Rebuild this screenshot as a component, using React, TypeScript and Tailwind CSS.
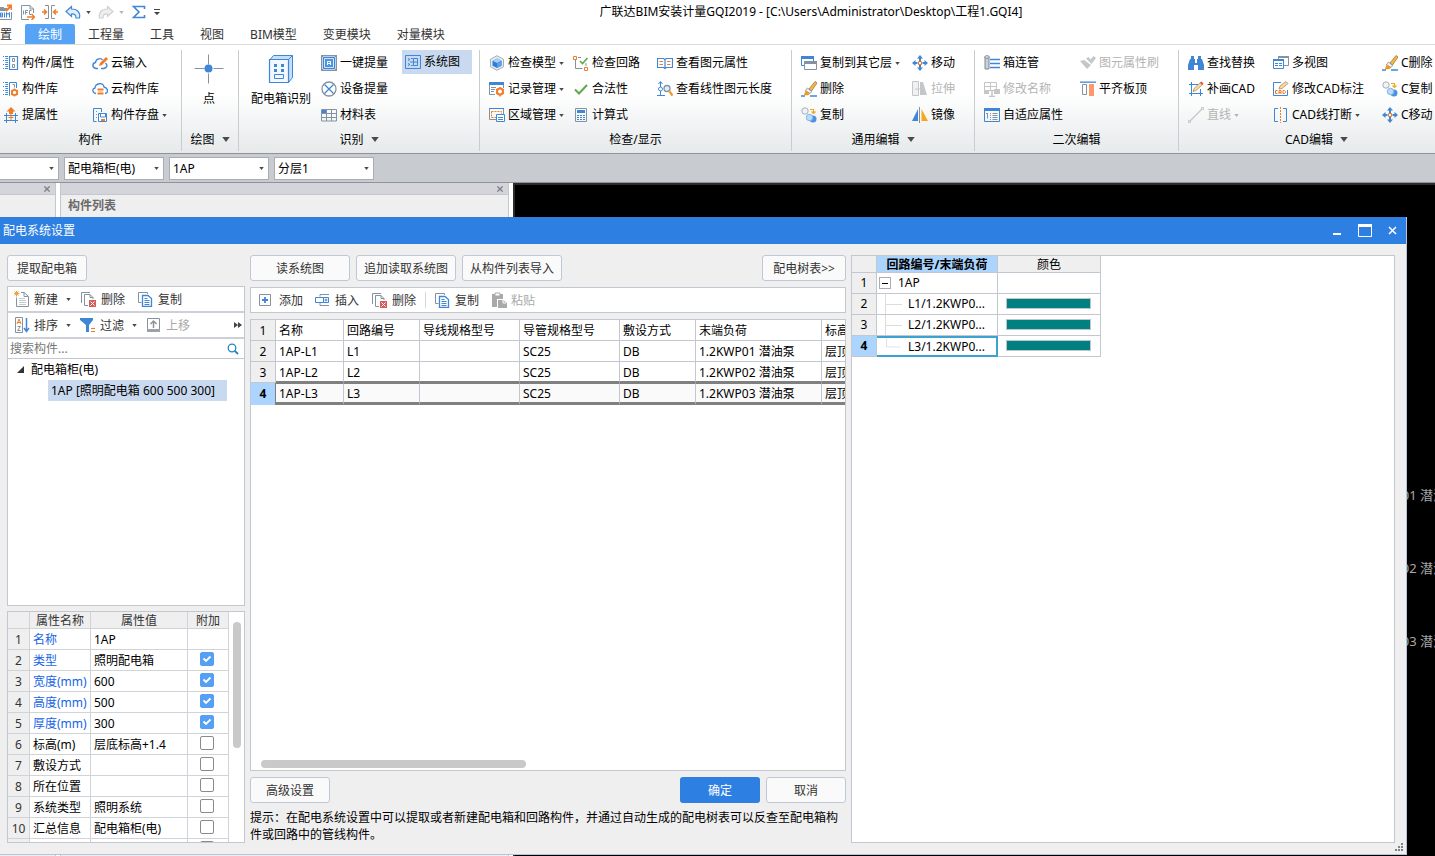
import React, { useState } from 'react';

const B = '#3f86d6';
const O = '#f07c28';
const G = '#8593a0';
const L = '#c4c6c8';

const icons: Record<string, React.ReactNode> = {
  bim: (
    <g fill="none">
      <path d="M4 3.500H8M15.500 8V15.500H4" stroke={G} />
      <path d="M4 4h7v3H4z" fill={G} />
      <path d="M4.500 9v4h2v-4zM4.500 11h2M8.500 8.500V13.500M10.500 13.500v-5l1.500 2 1.500-2v5" stroke={B} />
      <path d="M10 7l5-5M11 1.500h4.500V6" stroke={O} strokeWidth="2" />
    </g>
  ),
  ifc: (
    <g fill="none">
      <path d="M2.500 15.500V1.500H11l3.500 3.500v4M11 1.500V5h3.500M2.500 15.500H10" stroke={G} />
      <path d="M4.500 6.500v4M6.500 10.500v-4H9M6.500 8.500h2M12.500 6.500H10.500v4h2" stroke={G} />
      <path d="M8 13h7M12.500 10l3 3-3 3" stroke={O} strokeWidth="1.500" />
    </g>
  ),
  snap: (
    <g fill="none">
      <path d="M3 1.500h3.500v13H3M13 1.500H9.500v13H13" stroke={G} />
      <path d="M0 8h4M2 5.500L4.500 8 2 10.500M16 8h-4M14 5.500L11.500 8l2.500 2.500" stroke={O} strokeWidth="1.500" />
    </g>
  ),
  undo: <path d="M6.500 2.500L1 7.500l5.500 5V10c3-.3 4.500 1 4.500 4h3.500c1-5-1.500-9-8-9z" fill="#e2eefb" stroke={B} strokeWidth="1.200" />,
  redo: <path d="M9.500 2.500l5.500 5-5.500 5V10c-3-.3-4.500 1-4.500 4H1.500c-1-5 1.500-9 8-9z" fill="#eee" stroke="#d0d0d0" strokeWidth="1.200" />,
  sigma: <path d="M13.500 5V2.500H2.500L8 8l-5.500 5.500h11V11" fill="none" stroke={B} strokeWidth="1.600" />,
  compProp: (
    <g fill="none" stroke={B}>
      <path d="M6.500 1.500h8v13h-8z" strokeWidth="1.200" />
      <path d="M9.500 3.500h2v3h-2zM9.500 9.500h2v3h-2z" stroke={G} />
      <path d="M0 1.500h5M0 5.500h5M0 9.500h5M0 13.500h5" strokeDasharray="1 1 3" />
      <path d="M2.500 3.500h2.500M2.500 7.500h2.500M2.500 11.500h2.500" />
    </g>
  ),
  compLib: (
    <g fill="none" stroke={B}>
      <path d="M7 14.500h-.5v-13h7V7" />
      <path d="M9.500 3.500h2v3" stroke={G} />
      <path d="M0 1.500h5M0 5.500h5M0 9.500h5M0 13.500h5" strokeDasharray="1 1 3" />
      <path d="M2.500 3.500h2.500M2.500 7.500h2.500M2.500 11.500h2.500" />
      <circle cx="11.500" cy="11.500" r="2.600" stroke={O} strokeWidth="1.800" />
      <path d="M11.500 7.500v1M11.500 14.500v1M8 9.500l1 .5M14 13l1 .5M8 13.500l1-.5M14 10l1-.5" stroke={O} strokeWidth="1.400" />
    </g>
  ),
  pickProp: (
    <g fill="none">
      <path d="M3.500 6v10M12.500 6v10M1 8.500h14M1 13.500h14" stroke={B} />
      <path d="M5.500 10.500h5M8 6v7" stroke={O} />
      <path d="M8 0l4.500 4.500H10V7H6V4.500H3.500z" fill={O} />
    </g>
  ),
  cloudIn: (
    <g fill="none">
      <path d="M6 13.500H4C0 13 0 8 3.500 7.500 4 3.500 9 2.500 10.500 5M13.500 8c2.500 2 1.500 5-1.500 5.500H9" stroke={B} strokeWidth="1.400" />
      <path d="M7 11l1-3 6-6 2 2-6 6z" fill={O} />
    </g>
  ),
  cloudLib: (
    <g fill="none">
      <path d="M4 12.500C0 12 0 7.500 3 7c.5-5 8-6 9-1 4.500 1 4.500 6 1 6.500" stroke={B} strokeWidth="1.300" />
      <path d="M5.500 8.500h6M5.500 12.500h6" stroke={O} strokeWidth="1.800" />
      <path d="M6 10.500h5" stroke="#fbc9a0" />
    </g>
  ),
  save: (
    <g fill="none">
      <path d="M4.500 14.500h-3v-13h8V5" stroke={B} />
      <path d="M4 4.500h1M4 7.500h1M4 10.500h1" stroke={G} />
      <path d="M6.500 6.500h8v8h-8z" fill="#fff" stroke={B} />
      <path d="M8.500 7v3h5V7" stroke={B} />
      <path d="M9 12h4v2H9z" fill={O} />
    </g>
  ),
  oneKey: (
    <g>
      <path d="M.5.5h15v15H.5z" fill="#dbe9f8" stroke={G} />
      <path d="M2.500 2.500h11v11h-11z" fill="#fff" stroke={B} strokeWidth="1.400" />
      <path d="M4 4h8v8H4z" fill="#4f94e0" />
      <path d="M6.500 10V6.500h3V10M6.500 8.500h3" fill="none" stroke="#fff" />
      <path d="M0 0l3 3M16 0l-3 3M0 16l3-3M16 16l-3-3" stroke={G} />
    </g>
  ),
  device: (
    <g fill="none">
      <circle cx="8" cy="8" r="7" stroke={G} strokeWidth="1.300" />
      <path d="M3.500 3.500l9 9M12.500 3.500l-9 9" stroke={B} strokeWidth="1.300" />
    </g>
  ),
  table: (
    <g fill="none">
      <path d="M.5 2.500h15v11.500H.5zM.5 6.500h15M.5 10.500h15M5.500 2.500V14M10.500 2.500V14" stroke={G} />
      <path d="M1 3h4v3H1z" fill={B} />
    </g>
  ),
  sys: (
    <g fill="none" stroke={B}>
      <path d="M.5 1.500h15v13H.5z" />
      <path d="M8.500 4.500h4v7h-4zM8.500 8h4M6 4.500h2M6 11.500h2M5 8h3" />
      <path d="M3 4.500l2 1-2 1M3 9.500l2 1-2 1" />
    </g>
  ),
  cube: (
    <g>
      <path d="M8 .7l6.500 3.500v7.600L8 15.300 1.500 11.800V4.200z" fill="#e6ebf0" stroke="#a5afb8" />
      <path d="M8 3.500l4.500 2.300v5L8 13l-4.500-2.200v-5z" fill="#2f7cd8" />
      <path d="M8 3.500l4.500 2.300L8 8 3.500 5.800z" fill="#a5cdf7" />
      <path d="M8 8l4.500-2.200v5L8 13z" fill="#5a9ee8" />
    </g>
  ),
  record: (
    <g fill="none">
      <path d="M6 13.500H.5v-11h14V7" stroke={G} />
      <path d="M0 1h15v3H0z" fill={B} />
      <path d="M2 6.500h5M2 8.500h4M2 10.500h3" stroke={G} />
      <circle cx="11" cy="10.500" r="3" stroke={O} strokeWidth="2" />
      <path d="M11 6v1M11 14v1.500M7 8.500l1 .5M14 12l1 .5M7 12.500l1-.5M14 9l1-.5" stroke={O} strokeWidth="1.500" />
    </g>
  ),
  region: (
    <g fill="none">
      <path d="M.5 1.500h14v11H.5z" stroke={G} />
      <path d="M0 1h15v1H0z" fill={B} />
      <path d="M2.500 4.500h10v6h-10z" stroke={O} strokeDasharray="2 1" />
      <path d="M7.500 7.500h8v7h-8z" fill="#fff" stroke={B} />
      <path d="M9 10.500h5M9 12.500h5" stroke={B} />
    </g>
  ),
  chkLoop: (
    <g fill="none">
      <path d="M.5 1.500h3v3h-3zM11.500 12.500h3v3h-3z" stroke={O} />
      <path d="M5 2.500h3M2.500 5v8.500h7" stroke={G} />
      <path d="M7 6l2.500 2.500L14.500 3" stroke="#5da94c" strokeWidth="1.600" />
      <path d="M13 8v3" stroke={G} />
    </g>
  ),
  check: <path d="M2 8.500l4 4L14 4" fill="none" stroke="#5da94c" strokeWidth="2" />,
  calc: (
    <g fill="none">
      <path d="M2.500 1.500h11v13h-11z" stroke={G} />
      <path d="M4 3h8v3H4z" fill={B} />
      <path d="M4 8.500h8M4 10.500h8M4 12.500h8" stroke={B} strokeDasharray="2 1" />
    </g>
  ),
  book: (
    <g fill="none">
      <path d="M.5 3.500h6l1.500 1 1.500-1h6v9h-6l-1.500 1-1.500-1h-6zM8 4.500v9" stroke={B} strokeWidth="1.200" />
      <path d="M2.500 6.500h3.500M2.500 9.500h3.500M10 6.500h3.500M10 9.500h3.500" stroke={O} strokeWidth="1.200" />
    </g>
  ),
  lineLen: (
    <g fill="none">
      <path d="M3.500 1v14M1.500 3l2-2.500L5.500 3" stroke={B} />
      <circle cx="3.500" cy="8" r="2" fill="#fff" stroke={B} />
      <path d="M0 14.500h8" stroke={B} />
      <circle cx="10" cy="7.500" r="3" fill="#e1eefb" stroke={G} strokeWidth="1.300" />
      <path d="M12.500 10.500l3 4" stroke="#f39a1e" strokeWidth="2.200" />
    </g>
  ),
  copyLayer: (
    <g>
      <path d="M.5 1.500h12v9H.5z" fill="#fff" stroke={B} />
      <path d="M0 1h13v3H0z" fill={B} />
      <path d="M3.500 6.500h12v8h-12z" fill="#fff" stroke={G} />
      <path d="M3 6h13v3H3z" fill={G} />
    </g>
  ),
  brush: (
    <g>
      <path d="M8 8l6-7.500 2 1.500L10.500 10z" fill="#f6b846" stroke="#8d6a2e" strokeWidth=".7" />
      <path d="M6.500 7l4 3.500-1.500 2-4.500-3z" fill="#f3f3f3" stroke="#7a7a7a" strokeWidth=".7" />
      <path d="M4.500 9.500l4.500 3.200c-1.500 2-4.500 2-6 1z" fill="#f3991c" />
      <path d="M0 15h4M9 15h7" stroke={B} strokeWidth="1.400" />
    </g>
  ),
  copyObj: (
    <g fill="none">
      <circle cx="4" cy="4" r="3.200" fill="#f0f2f4" stroke="#a5afb8" />
      <path d="M9 2.500h3.500V6M10.500 4.500l2 2 2-2" stroke="#f3a81c" strokeWidth="1.200" />
      <circle cx="12" cy="12" r="3.500" fill="#4c92de" />
      <circle cx="8.500" cy="10.500" r="3.200" fill="#bcdcfa" stroke="#7fb2ea" />
    </g>
  ),
  move: (
    <g fill={B}>
      <path d="M8 0l3 3.500H9V6H7V3.500H5zM8 16l3-3.500H9V10H7v2.500H5zM0 8l3.500-3v2H5.500v2h-2v2zM16 8l-3.500-3v2H10.500v2h2v2z" />
      <path d="M6.500 6.500h3v3h-3z" fill="#fff" stroke={O} />
    </g>
  ),
  stretch: (
    <g>
      <path d="M.5.5h6v14h-6z" fill="#f1f1f1" stroke={L} />
      <path d="M8 1h3l4 13H8z" fill={L} />
      <path d="M3 8h6" stroke={L} />
    </g>
  ),
  mirror: (
    <g>
      <path d="M6 2v12H0z" fill={B} />
      <path d="M9.500 2v12H16z" fill="#f5a81c" />
      <path d="M7.500 0v16" stroke={G} />
    </g>
  ),
  boxPipe: (
    <g>
      <path d="M1 2h4v12H1z" fill="#c9d0d6" stroke="#7f8b95" />
      <ellipse cx="3" cy="2" rx="2.300" ry="1.300" fill="#e6eaed" stroke="#7f8b95" />
      <path d="M6 4.500h10M6 8.500h10M6 12.500h10" stroke={B} strokeWidth="1.300" />
    </g>
  ),
  rename: (
    <g fill="none" stroke={L}>
      <path d="M.5 1.500h12v8H.5zM.5 5.500h12M6.500 1.500v8" />
      <path d="M0 9h5v4H0zM10 8h6v5h-6z" fill={L} stroke="none" />
      <path d="M5 15.500h6M8 9v6" strokeWidth="1.500" />
    </g>
  ),
  adapt: (
    <g fill="none">
      <path d="M.5 1.500h15v13H.5z" stroke={B} />
      <path d="M0 1h16v3H0z" fill={B} />
      <path d="M2 6.500h2M3.500 6.500v5M6 6.500h1M6 8.500h1M6 10.500h1M6 12.500h1M8.500 6.500h5M8.500 8.500h5M8.500 10.500h5M8.500 12.500h5" stroke={G} />
    </g>
  ),
  format: (
    <g fill={L}>
      <path d="M0 6l4-1 7 5-4 4z" />
      <path d="M6 3.500l2.500-1.500 2 2.500L13.500 1 16 3l-4.500 6z" />
    </g>
  ),
  align: (
    <g>
      <path d="M0 .500h16v1.300H0z" fill={B} />
      <path d="M2.500 3.500h4v10h-4z" fill="#fff" stroke={G} />
      <path d="M9 3h5v12H9z" fill="#fc9a6b" />
    </g>
  ),
  find: (
    <g fill={B}>
      <path d="M3 1h3v3H3zM10 1h3v3h-3zM2 4h5v2h2V4h5l2 6v5h-6v-5H6v5H0v-5z" />
      <path d="M7 6h2v2H7z" fill="#fff" />
    </g>
  ),
  drawCad: (
    <g fill="none">
      <path d="M3.500 1v14M1 3.500h9M1 12.500h14M12.500 8v7" stroke={B} />
      <path d="M5 10.500l1-3L13 1l2 2-7 6.500z" fill="#f9d9a8" stroke="#a98243" strokeWidth=".7" />
      <path d="M12 2l2 2 1.500-1.500-2-2z" fill="#e6543e" />
    </g>
  ),
  line: (
    <g fill="none" stroke={L}>
      <path d="M2.500 13.500L13.500 2.500" strokeWidth="1.200" />
      <path d="M.5 13.500h2v2h-2zM13.500.5h2v2h-2z" />
    </g>
  ),
  views: (
    <g>
      <path d="M5.500 1.500h10v9h-10z" fill="#fff" stroke={G} />
      <path d="M5 1h11v2H5z" fill={G} />
      <path d="M.5 4.500h10v9H.5z" fill="#fff" stroke={B} />
      <path d="M0 4h11v2H0z" fill={B} />
      <path d="M2 8.500h7M2 10.500h7" stroke={B} strokeDasharray="3 1" />
    </g>
  ),
  editCad: (
    <g fill="none">
      <path d="M8 1.500H.5v13h14V9" stroke={B} />
      <path d="M4.500 9.500H2.500v3h2M6 13V9.500h2V13M6 11.500h2M10 9.500h1.500l1 1v1l-1 1H10z" stroke={O} />
      <path d="M6 8l1-3 6-4.500 2 2L9 7.500z" fill="#f9d9a8" stroke="#a98243" strokeWidth=".7" />
    </g>
  ),
  breakLn: (
    <g fill="none">
      <path d="M5 1.500H1.500v13H5M10 1.500h3.500v13H10" stroke={B} />
      <path d="M7.500 0v16" stroke={O} strokeDasharray="2 1" />
    </g>
  ),
  newDoc: (
    <g fill="none">
      <path d="M2.500 6.500v9h12v-10L10 1.500H7M10 1.500v4h4" stroke={G} />
      <path d="M5 7.500h6M5 9.500h7M5 11.500h7M5 13.500h7" stroke="#c3c9ce" />
      <path d="M2.500 0v5.500M0 2.500h5.500M.5.5l4 4M4.500.5l-4 4" stroke="#f5a03a" />
    </g>
  ),
  del: (
    <g fill="none">
      <path d="M.5 12V1.500H9M3.500 14.500v-11H9l3 3V8M3.500 14.500H7" stroke={G} />
      <path d="M9 3.500v3h3" stroke={G} />
      <path d="M8 9h7v7H8z" fill="#d65c5c" />
      <path d="M9.500 10.500l4 4M13.500 10.500l-4 4" stroke="#fff" />
    </g>
  ),
  copy: (
    <g fill="none">
      <path d="M3.500 11.500h-3V1.500h9V3" stroke={G} />
      <path d="M4.500 4.500H10l3.500 3v8h-9z" fill="#fff" stroke={B} strokeWidth="1.300" />
      <path d="M6.500 7.500h3M6.500 9.500h5M6.500 11.500h5M6.500 13.500h5" stroke={B} />
    </g>
  ),
  sort: (
    <g fill="none">
      <path d="M1.500.5h7v15h-7z" stroke={G} />
      <path d="M3 7l2-5 2 5M3.500 5.500h3" stroke={O} />
      <path d="M3.500 9.500h3l-3 4h3" stroke={G} />
      <path d="M12.500 1v13M10 11l2.500 3.500L15 11" stroke={B} strokeWidth="1.500" />
    </g>
  ),
  filter: (
    <g>
      <path d="M0 1h13v2L9 8v7H6V8L0 3z" fill={B} />
      <path d="M11 11.500h4M11 14.500h4" stroke={O} />
    </g>
  ),
  up: (
    <g>
      <path d="M1.500 1.500h12v11h-12z" fill="#fff" stroke={G} />
      <path d="M1 12h13v3H1z" fill="#9aa1a8" />
      <path d="M7.500 11V4M4.500 7l3-3 3 3" fill="none" stroke="#8f959b" strokeWidth="1.500" />
    </g>
  ),
  add: (
    <g fill="none">
      <path d="M.5 2.500h11v11H.5z" stroke={G} />
      <path d="M3 8h6M6 5v6" stroke={B} strokeWidth="1.800" />
    </g>
  ),
  insert: (
    <g fill="none">
      <path d="M5 4.500V2.500h9M5 11v2.500h9" stroke={G} />
      <path d="M.5 5.500h8v5h-8zM8.500 5.500h5v5h-5" stroke={B} />
      <path d="M9.500 8h3M11 6.500v3" stroke={B} />
    </g>
  ),
  paste: (
    <g>
      <path d="M1 2h11v5H6v8H1z" fill="#a9a9a9" />
      <path d="M4 1h5v3H4z" fill="#fff" stroke="#a9a9a9" />
      <path d="M7 8h5l4 3v5H7z" fill="#a9a9a9" />
      <path d="M12 8v3h3" fill="none" stroke="#fff" />
    </g>
  ),
};

function Icon({ name }: { name: string }) {
  return (
    <svg viewBox="0 0 16 16" className="size-4 shrink-0" aria-hidden="true">
      {icons[name]}
    </svg>
  );
}

function Caret({ muted = false, big = false }: { muted?: boolean; big?: boolean }) {
  return (
    <svg viewBox="0 0 6 4" className={big ? 'h-[5px] w-[8px] shrink-0' : 'h-[3px] w-[5px] shrink-0'} aria-hidden="true">
      <path d="M0 0h6L3 4z" fill={muted ? '#b5b5b5' : '#4a4a4a'} />
    </svg>
  );
}

type Item = { icon: string; label: string; caret?: boolean; off?: boolean; on?: boolean };

function Tool({ icon, label, caret, off, on }: Item) {
  return (
    <button
      type="button"
      disabled={off}
      className={
        on
          ? 'flex h-[24px] w-[70px] items-center gap-[3px] bg-[#c9d9ef] pl-[3px] whitespace-nowrap'
          : 'flex h-[26px] items-center gap-[3px] whitespace-nowrap disabled:text-[#b4b4b4]'
      }
    >
      <Icon name={icon} />
      <span>{label}</span>
      {caret && <Caret muted={off} />}
    </button>
  );
}

function Column({ className, items }: { className: string; items: Item[] }) {
  return (
    <div className={`flex shrink-0 flex-col items-start ${className}`}>
      {items.map((it) => (
        <Tool key={it.label} {...it} />
      ))}
    </div>
  );
}

function Group({ className, label, caret, children }: { className: string; label: string; caret?: boolean; children: React.ReactNode }) {
  return (
    <section className={`flex flex-col border-r border-[#c9ccd0] ${className}`}>
      <div className="flex h-[78px]">{children}</div>
      <div className="flex flex-1 items-center justify-center gap-[7px]">
        {label}
        {caret && <Caret big />}
      </div>
    </section>
  );
}

const tabs = ['绘制', '工程量', '工具', '视图', 'BIM模型', '变更模块', '对量模块'];

function Ribbon() {
  return (
    <div className="flex h-[109px] shrink-0 overflow-hidden border-t border-[#dcdcdc] bg-linear-to-b from-white from-45% to-[#e6eaeb] pt-[5px] pb-[2px]">
      <Group className="w-[182px] shrink-0" label="构件">
        <Column
          className="w-[92px] pl-[3px]"
          items={[
            { icon: 'compProp', label: '构件/属性' },
            { icon: 'compLib', label: '构件库' },
            { icon: 'pickProp', label: '提属性' },
          ]}
        />
        <Column
          className="w-[89px]"
          items={[
            { icon: 'cloudIn', label: '云输入' },
            { icon: 'cloudLib', label: '云构件库' },
            { icon: 'save', label: '构件存盘', caret: true },
          ]}
        />
      </Group>
      <Group className="w-[57px] shrink-0" label="绘图" caret>
        <button type="button" className="flex w-full flex-col items-center gap-[7px] pr-[2px] pt-[4px]">
          <svg viewBox="0 0 30 30" className="size-[30px]" aria-hidden="true">
            <path d="M.5 14.500h10M19.500 14.500h10M14.500.500v10M14.500 19.500v10" stroke={G} />
            <circle cx="14.500" cy="14.500" r="4" fill={B} />
          </svg>
          <span>点</span>
        </button>
      </Group>
      <Group className="w-[241px] shrink-0" label="识别" caret>
        <button type="button" className="flex w-[82px] shrink-0 flex-col items-center gap-[7px] pt-[4px] pl-[2px] whitespace-nowrap">
          <svg viewBox="0 0 30 30" className="size-[30px]" aria-hidden="true">
            <path d="M4 5.500L7.500 1.500h19v22l-4 5" fill="#c5defa" stroke={B} />
            <path d="M3.500 5.500h19v23h-19z" fill="#f3f8fe" stroke={B} strokeWidth="1.200" />
            <path d="M22.500 5.500l4-4" stroke={B} />
            <path d="M8 10h3v3H8zM15 10h3v3h-3zM8 15h3v3H8zM15 15h3v3h-3z" fill={B} />
            <path d="M8.500 20.500h9v4h-9z" fill="none" stroke={B} />
          </svg>
          <span>配电箱识别</span>
        </button>
        <Column
          className="w-[81px]"
          items={[
            { icon: 'oneKey', label: '一键提量' },
            { icon: 'device', label: '设备提量' },
            { icon: 'table', label: '材料表' },
          ]}
        />
        <Column className="w-[70px]" items={[{ icon: 'sys', label: '系统图', on: true }]} />
      </Group>
      <Group className="w-[312px] shrink-0" label="检查/显示">
        <Column
          className="w-[93px] pl-[9px]"
          items={[
            { icon: 'cube', label: '检查模型', caret: true },
            { icon: 'record', label: '记录管理', caret: true },
            { icon: 'region', label: '区域管理', caret: true },
          ]}
        />
        <Column
          className="w-[84px]"
          items={[
            { icon: 'chkLoop', label: '检查回路' },
            { icon: 'check', label: '合法性' },
            { icon: 'calc', label: '计算式' },
          ]}
        />
        <Column
          className="w-[120px]"
          items={[
            { icon: 'book', label: '查看图元属性' },
            { icon: 'lineLen', label: '查看线性图元长度' },
          ]}
        />
      </Group>
      <Group className="w-[183px] shrink-0" label="通用编辑" caret>
        <Column
          className="w-[120px] pl-[9px]"
          items={[
            { icon: 'copyLayer', label: '复制到其它层', caret: true },
            { icon: 'brush', label: '删除' },
            { icon: 'copyObj', label: '复制' },
          ]}
        />
        <Column
          className="w-[60px]"
          items={[
            { icon: 'move', label: '移动' },
            { icon: 'stretch', label: '拉伸', off: true },
            { icon: 'mirror', label: '镜像' },
          ]}
        />
      </Group>
      <Group className="w-[204px] shrink-0" label="二次编辑">
        <Column
          className="w-[105px] pl-[9px]"
          items={[
            { icon: 'boxPipe', label: '箱连管' },
            { icon: 'rename', label: '修改名称', off: true },
            { icon: 'adapt', label: '自适应属性' },
          ]}
        />
        <Column
          className="w-[95px]"
          items={[
            { icon: 'format', label: '图元属性刷', off: true },
            { icon: 'align', label: '平齐板顶' },
          ]}
        />
      </Group>
      <Group className="w-[276px] shrink-0" label="CAD编辑" caret>
        <Column
          className="w-[94px] pl-[9px]"
          items={[
            { icon: 'find', label: '查找替换' },
            { icon: 'drawCad', label: '补画CAD' },
            { icon: 'line', label: '直线', caret: true, off: true },
          ]}
        />
        <Column
          className="w-[109px]"
          items={[
            { icon: 'views', label: '多视图' },
            { icon: 'editCad', label: '修改CAD标注' },
            { icon: 'breakLn', label: 'CAD线打断', caret: true },
          ]}
        />
        <Column
          className="w-[72px]"
          items={[
            { icon: 'brush', label: 'C删除' },
            { icon: 'copyObj', label: 'C复制' },
            { icon: 'move', label: 'C移动' },
          ]}
        />
      </Group>
    </div>
  );
}

function Combo({ label, value, className }: { label: string; value: string; className: string }) {
  return (
    <div className={`relative ${className}`}>
      <select aria-label={label} className="h-[23px] w-full appearance-none border border-[#a9adb3] bg-white pt-[2px] pl-[3px] outline-none">
        <option>{value}</option>
      </select>
      <span className="pointer-events-none absolute inset-y-0 right-[5px] flex items-center">
        <Caret />
      </span>
    </div>
  );
}

function Btn({ children, className = 'w-[100px]' }: { children: React.ReactNode; className?: string }) {
  return (
    <button type="button" className={`h-[26px] rounded-[3px] border border-[#c0c7d6] bg-[#fafafa] pt-[2px] whitespace-nowrap text-[#333] ${className}`}>
      {children}
    </button>
  );
}

function BarBtn({ icon, label, caret, off, className }: Item & { className: string }) {
  return (
    <button type="button" disabled={off} className={`flex h-full shrink-0 items-center gap-[4px] whitespace-nowrap text-[#333] disabled:text-[#a9a9a9] ${className}`}>
      <Icon name={icon} />
      <span className="pt-[2px]">{label}</span>
      {caret && (
        <span className="pl-[4px]">
          <Caret />
        </span>
      )}
    </button>
  );
}

const props: [string, string, boolean | null, boolean][] = [
  ['名称', '1AP', null, true],
  ['类型', '照明配电箱', true, true],
  ['宽度(mm)', '600', true, true],
  ['高度(mm)', '500', true, true],
  ['厚度(mm)', '300', true, true],
  ['标高(m)', '层底标高+1.4', false, false],
  ['敷设方式', '', false, false],
  ['所在位置', '', false, false],
  ['系统类型', '照明系统', false, false],
  ['汇总信息', '配电箱柜(电)', false, false],
  ['', '', false, false],
];

function PropTable() {
  const [checked, setChecked] = useState(props.map((p) => p[2] === true));
  const head = 'border-r border-b border-[#d0d3d8] p-0 pt-[2px] leading-[14px] font-normal';
  const cell = 'border-r border-b border-[#d0d3d8] p-0 pt-[2px]';
  return (
    <div className="flex h-[232px] shrink-0 overflow-hidden border border-[#c3c7cf] bg-white">
      <table className="h-fit w-[221px] shrink-0 table-fixed border-separate border-spacing-0">
        <thead>
          <tr className="h-[17px] bg-[#efefef] text-[#333]">
            <th className={`${head} w-[22px]`} />
            <th className={`${head} w-[61px]`}>属性名称</th>
            <th className={`${head} w-[97px]`}>属性值</th>
            <th className={`${head} w-[41px]`}>附加</th>
          </tr>
        </thead>
        <tbody>
          {props.map(([name, value, has, key], i) => (
            <tr key={i} className="h-[21px] leading-4 whitespace-nowrap">
              <td className={`${cell} bg-[#efefef] text-center text-[#333]`}>{name && i + 1}</td>
              <td className={key ? `${cell} text-[#1464e6]` : cell}>
                <div className="pl-[3px]">{name}</div>
              </td>
              <td className={cell}>
                <div className="pl-[3px]">{value}</div>
              </td>
              <td className="border-r border-b border-[#d0d3d8] p-0 pb-[2px]">
                {has !== null && (
                  <label className="flex justify-center pr-[2px]">
                    <input
                      type="checkbox"
                      aria-label={`附加 ${name}`}
                      checked={checked[i]}
                      onChange={() => setChecked(checked.map((c, j) => (j === i ? !c : c)))}
                      className="peer size-[14px] appearance-none rounded-[2px] border border-[#8a8a8a] bg-white checked:border-[#559ff5] checked:bg-[#559ff5]"
                    />
                    <svg viewBox="0 0 14 14" className="pointer-events-none -ml-[14px] hidden size-[14px] peer-checked:block" aria-hidden="true">
                      <path d="M3.500 6.500L6 9l4.500-4.500" fill="none" stroke="#fff" strokeWidth="1.800" />
                    </svg>
                  </label>
                )}
              </td>
            </tr>
          ))}
        </tbody>
      </table>
      <div className="flex flex-1 justify-center pt-[10px]">
        <div className="h-[126px] w-[8px] rounded-full bg-[#c9c9c9]" />
      </div>
    </div>
  );
}

function LeftPane() {
  return (
    <div className="flex w-[238px] shrink-0 flex-col">
      <Btn className="w-[80px]">提取配电箱</Btn>
      <div className="mt-[5px] mb-[5px] flex min-h-0 flex-1 flex-col border border-[#c3c7cf] bg-white">
        <div className="flex h-[26px] shrink-0 border-b-2 border-[#cdd0d6] pl-[6px]">
          <BarBtn icon="newDoc" label="新建" caret className="w-[67px]" />
          <BarBtn icon="del" label="删除" className="w-[57px]" />
          <BarBtn icon="copy" label="复制" className="w-[57px]" />
        </div>
        <div className="flex h-[26px] shrink-0 border-b-2 border-[#cdd0d6] pl-[6px]">
          <BarBtn icon="sort" label="排序" caret className="w-[66px]" />
          <BarBtn icon="filter" label="过滤" caret className="w-[66px]" />
          <BarBtn icon="up" label="上移" off className="w-[57px]" />
          <button type="button" aria-label="更多" className="ml-auto pr-[2px]">
            <svg viewBox="0 0 8 6" className="h-[6px] w-[8px]" aria-hidden="true">
              <path d="M0 0l4 3-4 3zM4 0l4 3-4 3z" fill="#444" />
            </svg>
          </button>
        </div>
        <label className="flex h-[20px] shrink-0 items-center border-b border-[#c3c7cf] pr-[5px]">
          <input type="text" placeholder="搜索构件..." aria-label="搜索构件" className="min-w-0 flex-1 pl-[2px] outline-none placeholder:text-[#777]" />
          <svg viewBox="0 0 12 12" className="size-[12px]" aria-hidden="true">
            <circle cx="5" cy="5" r="3.800" fill="none" stroke="#1f86c6" strokeWidth="1.300" />
            <path d="M7.800 7.800L11 11" stroke="#1f86c6" strokeWidth="1.800" />
          </svg>
        </label>
        <ul>
          <li>
            <div className="flex h-[21px] items-center gap-[7px] pl-[9px]">
              <svg viewBox="0 0 7 7" className="size-[7px]" aria-hidden="true">
                <path d="M7 0v7H0z" fill="#333" />
              </svg>
              配电箱柜(电)
            </div>
            <ul className="pl-[40px]">
              <li className="flex h-[21px] w-[179px] items-center bg-[#c9d9ef] pl-[3px] whitespace-nowrap">1AP [照明配电箱 600 500 300]</li>
            </ul>
          </li>
        </ul>
      </div>
      <PropTable />
    </div>
  );
}

const rows = [
  ['名称', '回路编号', '导线规格型号', '导管规格型号', '敷设方式', '末端负荷', '标高(m)'],
  ['1AP-L1', 'L1', '', 'SC25', 'DB', '1.2KWP01 潜油泵', '层顶标高'],
  ['1AP-L2', 'L2', '', 'SC25', 'DB', '1.2KWP02 潜油泵', '层顶标高'],
  ['1AP-L3', 'L3', '', 'SC25', 'DB', '1.2KWP03 潜油泵', '层顶标高'],
];
const rowStyle = [
  'h-[21px] *:border-b *:border-b-[#c3c7cf]',
  'h-[21px] *:border-b *:border-b-[#c3c7cf]',
  'h-[21px] [&>td]:border-b-2 [&>td]:border-b-[#808080] [&>th]:border-b [&>th]:border-b-[#c3c7cf]',
  'h-[22px] [&>td]:border-b-3 [&>td]:border-t [&>td]:border-t-[#808080] [&>td]:border-b-[#808080] [&>td]:bg-[#fafafa]',
];

function MidPane() {
  return (
    <div className="flex w-[596px] shrink-0 flex-col">
      <div className="flex gap-[6px]">
        <Btn>读系统图</Btn>
        <Btn>追加读取系统图</Btn>
        <Btn>从构件列表导入</Btn>
        <Btn className="ml-auto w-[84px]">配电树表&gt;&gt;</Btn>
      </div>
      <div className="mt-[6px] flex h-[26px] shrink-0 items-center border border-[#c3c7cf] bg-white pl-[8px]">
        <BarBtn icon="add" label="添加" className="w-[56px]" />
        <BarBtn icon="insert" label="插入" className="w-[57px]" />
        <BarBtn icon="del" label="删除" className="w-[53px]" />
        <span className="mr-[9px] h-4 w-px bg-[#d3d6da]" />
        <BarBtn icon="copy" label="复制" className="w-[56px]" />
        <BarBtn icon="paste" label="粘贴" off className="w-[57px]" />
      </div>
      <div className="mt-[6px] flex min-h-0 flex-1 flex-col justify-between overflow-hidden border border-[#c3c7cf] bg-white">
        <table className="w-[671px] table-fixed border-separate border-spacing-0">
          <colgroup>
            <col className="w-[25px]" />
            <col className="w-[68px]" />
            <col className="w-[76px]" />
            <col className="w-[100px]" />
            <col className="w-[100px]" />
            <col className="w-[76px]" />
            <col className="w-[126px]" />
            <col className="w-[100px]" />
          </colgroup>
          <tbody>
            {rows.map((r, i) => (
              <tr key={i} className={rowStyle[i]}>
                <th scope="row" className={i === 3 ? 'border-r border-r-[#808080] bg-[#abd5ff] p-0 leading-4 font-bold' : 'border-r border-r-[#c3c7cf] bg-[#efefef] p-0 pt-[2px] leading-4 font-normal'}>
                  {i + 1}
                </th>
                {r.map((c, j) => (
                  <td key={j} className="overflow-hidden border-r border-r-[#c3c7cf] p-0 pt-[2px] pl-[3px] leading-4 whitespace-nowrap">
                    {c}
                  </td>
                ))}
              </tr>
            ))}
          </tbody>
        </table>
        <div className="mb-[2px] ml-[10px] h-[8px] w-[265px] rounded-full bg-[#c9c9c9]" />
      </div>
      <div className="mt-[6px] flex gap-[6px]">
        <Btn className="w-[80px]">高级设置</Btn>
        <button type="button" className="ml-auto h-[26px] w-[80px] rounded-[3px] bg-[#2d80e2] pt-[2px] text-white">
          确定
        </button>
        <Btn className="w-[80px]">取消</Btn>
      </div>
      <p className="mt-[6px] leading-[17px]">提示：在配电系统设置中可以提取或者新建配电箱和回路构件，并通过自动生成的配电树表可以反查至配电箱构件或回路中的管线构件。</p>
    </div>
  );
}

function RightPane() {
  const head = 'border-r border-b border-[#c3c7cf] p-0 pt-[2px] leading-[14px]';
  const cell = 'border-r border-b border-[#c3c7cf] p-0 leading-4';
  return (
    <div className="min-w-0 flex-1 border border-[#c3c7cf] bg-white">
      <table className="w-[249px] table-fixed border-separate border-spacing-0">
        <thead>
          <tr className="h-[17px] bg-[#efefef]">
            <th className={`${head} w-[25px]`} />
            <th className={`${head} w-[121px] bg-[#abd5ff] font-bold`}>回路编号/末端负荷</th>
            <th className={`${head} w-[103px] font-normal`}>颜色</th>
          </tr>
        </thead>
        <tbody>
          {['1AP', 'L1/1.2KWP0...', 'L2/1.2KWP0...', 'L3/1.2KWP0...'].map((t, i) => (
            <tr key={t} className="h-[21px]">
              <th scope="row" className={i === 3 ? `${cell} bg-[#abd5ff] font-bold` : `${cell} bg-[#efefef] font-normal`}>
                {i + 1}
              </th>
              <td className={i === 3 ? 'border-2 border-l-0 border-[#3aa3cf] p-0 leading-4' : cell}>
                <div className={i === 3 ? 'flex h-[17px] items-center' : 'flex h-[20px] items-center'}>
                  {i === 0 ? (
                    <button type="button" aria-label="折叠" className="mr-[7px] ml-[2px] flex size-[12px] items-center justify-center border border-[#a9adb3]">
                      <span className="h-px w-[6px] bg-black" />
                    </button>
                  ) : (
                    <svg viewBox="0 0 31 20" className="h-full w-[31px] shrink-0" aria-hidden="true">
                      <path d={i === 3 ? 'M8.500 0V10.500H25' : 'M8.500 0V20M8.500 10.500H25'} fill="none" stroke="#dcdcdc" />
                    </svg>
                  )}
                  {t}
                </div>
              </td>
              <td className={`${cell} pb-[2px]`}>{i > 0 && <div className="ml-[8px] h-[11px] w-[85px] border border-[#c0c4cc] bg-[#008080]" />}</td>
            </tr>
          ))}
        </tbody>
      </table>
    </div>
  );
}

function Dialog() {
  return (
    <div role="dialog" aria-label="配电系统设置" className="absolute top-[34px] right-[28px] bottom-px left-0 flex flex-col border-r border-b border-[#b8c4d6] bg-[#efefef]">
      <div className="flex h-[27px] shrink-0 items-center bg-[#2d80e2] pr-[9px] pl-[3px] text-white">
        <h2 className="flex-1">配电系统设置</h2>
        <button type="button" aria-label="最小化" className="mr-[16px]">
          <svg viewBox="0 0 9 12" className="h-[12px] w-[9px]" aria-hidden="true">
            <path d="M0 8h8v2H0z" fill="#fff" />
          </svg>
        </button>
        <button type="button" aria-label="最大化" className="mr-[16px]">
          <svg viewBox="0 0 14 13" className="h-[13px] w-[14px]" aria-hidden="true">
            <path d="M.5.500h13v12H.5z" fill="none" stroke="#fff" />
            <path d="M0 0h14v3H0z" fill="#fff" />
          </svg>
        </button>
        <button type="button" aria-label="关闭">
          <svg viewBox="0 0 9 9" className="size-[9px]" aria-hidden="true">
            <path d="M1 1l7 7M8 1L1 8" stroke="#fff" strokeWidth="1.500" />
          </svg>
        </button>
      </div>
      <div className="flex min-h-0 flex-1 gap-[5px] pt-[11px] pr-[11px] pb-[11px] pl-[7px]">
        <LeftPane />
        <MidPane />
        <RightPane />
      </div>
      <svg viewBox="0 0 8 8" className="absolute right-[3px] bottom-[3px] size-[8px]" aria-hidden="true">
        <path d="M6 0h2v2H6zM3 3h2v2H3zM6 3h2v2H6zM0 6h2v2H0zM3 6h2v2H3zM6 6h2v2H6z" fill="#7c8088" />
      </svg>
    </div>
  );
}

function PanelClose() {
  return (
    <button type="button" aria-label="关闭面板" className="flex h-full items-center">
      <svg viewBox="0 0 7 7" className="size-[6px]" aria-hidden="true">
        <path d="M.5.500l6 6M6.500.500l-6 6" stroke="#7a7e85" strokeWidth="1.500" />
      </svg>
    </button>
  );
}

export default function App() {
  return (
    <div className="flex h-screen flex-col overflow-hidden bg-white font-['Noto_Sans','Noto_Sans_CJK_SC',sans-serif] text-[12px] leading-4 text-black">
      <header className="flex h-[24px] shrink-0 items-center">
        <div className="-ml-1 flex w-[191px] shrink-0 items-center gap-[7px]">
          <Icon name="bim" />
          <Icon name="ifc" />
          <Icon name="snap" />
          <span className="flex items-center gap-[5px]">
            <Icon name="undo" />
            <Caret />
          </span>
          <span className="flex items-center gap-[5px]">
            <Icon name="redo" />
            <Caret muted />
          </span>
          <Icon name="sigma" />
          <svg viewBox="0 0 6 7" className="h-[7px] w-[6px]" aria-hidden="true">
            <path d="M0 0h6v1H0zM0 3h6L3 6z" fill="#444" />
          </svg>
        </div>
        <h1 className="flex-1 text-center whitespace-nowrap">广联达BIM安装计量GQI2019 - [C:\Users\Administrator\Desktop\工程1.GQI4]</h1>
      </header>
      <nav className="flex h-[20px] shrink-0 overflow-hidden text-[#333]">
        <a href="#settings" className="pr-[13px] leading-[22px]">
          置
        </a>
        {tabs.map((t, i) => (
          <a key={t} href={`#tab${i}`} className={i === 0 ? 'rounded-t-[2px] bg-[#56a3f5] px-[13px] leading-[22px] text-white' : 'px-[13px] leading-[22px]'}>
            {t}
          </a>
        ))}
      </nav>
      <Ribbon />
      <div className="flex h-[30px] shrink-0 items-center gap-[5px] border-y border-[#8f949c] bg-[#c8cbcf]">
        <Combo label="专业" value="" className="-ml-px w-[60px]" />
        <Combo label="构件类型" value="配电箱柜(电)" className="w-[100px]" />
        <Combo label="构件" value="1AP" className="w-[100px]" />
        <Combo label="分层" value="分层1" className="w-[100px]" />
      </div>
      <main className="relative flex min-h-0 flex-1">
        <aside className="w-[56px] shrink-0 border-r border-[#c3c7cf] bg-[#efefef]">
          <div className="flex h-[12px] justify-end border-b border-[#c3c7cf] bg-[#d3d5da] pr-[5px]">
            <PanelClose />
          </div>
        </aside>
        <aside className="ml-[4px] w-[449px] shrink-0 border-x border-[#c3c7cf] bg-[#efefef]">
          <div className="flex h-[12px] justify-end border-b border-[#c3c7cf] bg-[#d3d5da] pr-[5px]">
            <PanelClose />
          </div>
          <h2 className="pt-[3px] pl-[7px] font-bold text-[#6a6a6a]">构件列表</h2>
        </aside>
        <section aria-label="图纸" className="relative ml-[4px] flex-1 overflow-hidden border-t-2 border-l-2 border-[#2c2c2c] bg-black text-[13px] text-[#a8a8a8]">
          <span className="absolute top-[302px] right-[-11px] whitespace-nowrap">01 潜油</span>
          <span className="absolute top-[375px] right-[-11px] whitespace-nowrap">02 潜油</span>
          <span className="absolute top-[448px] right-[-11px] whitespace-nowrap">03 潜油</span>
        </section>
        <Dialog />
      </main>
    </div>
  );
}
